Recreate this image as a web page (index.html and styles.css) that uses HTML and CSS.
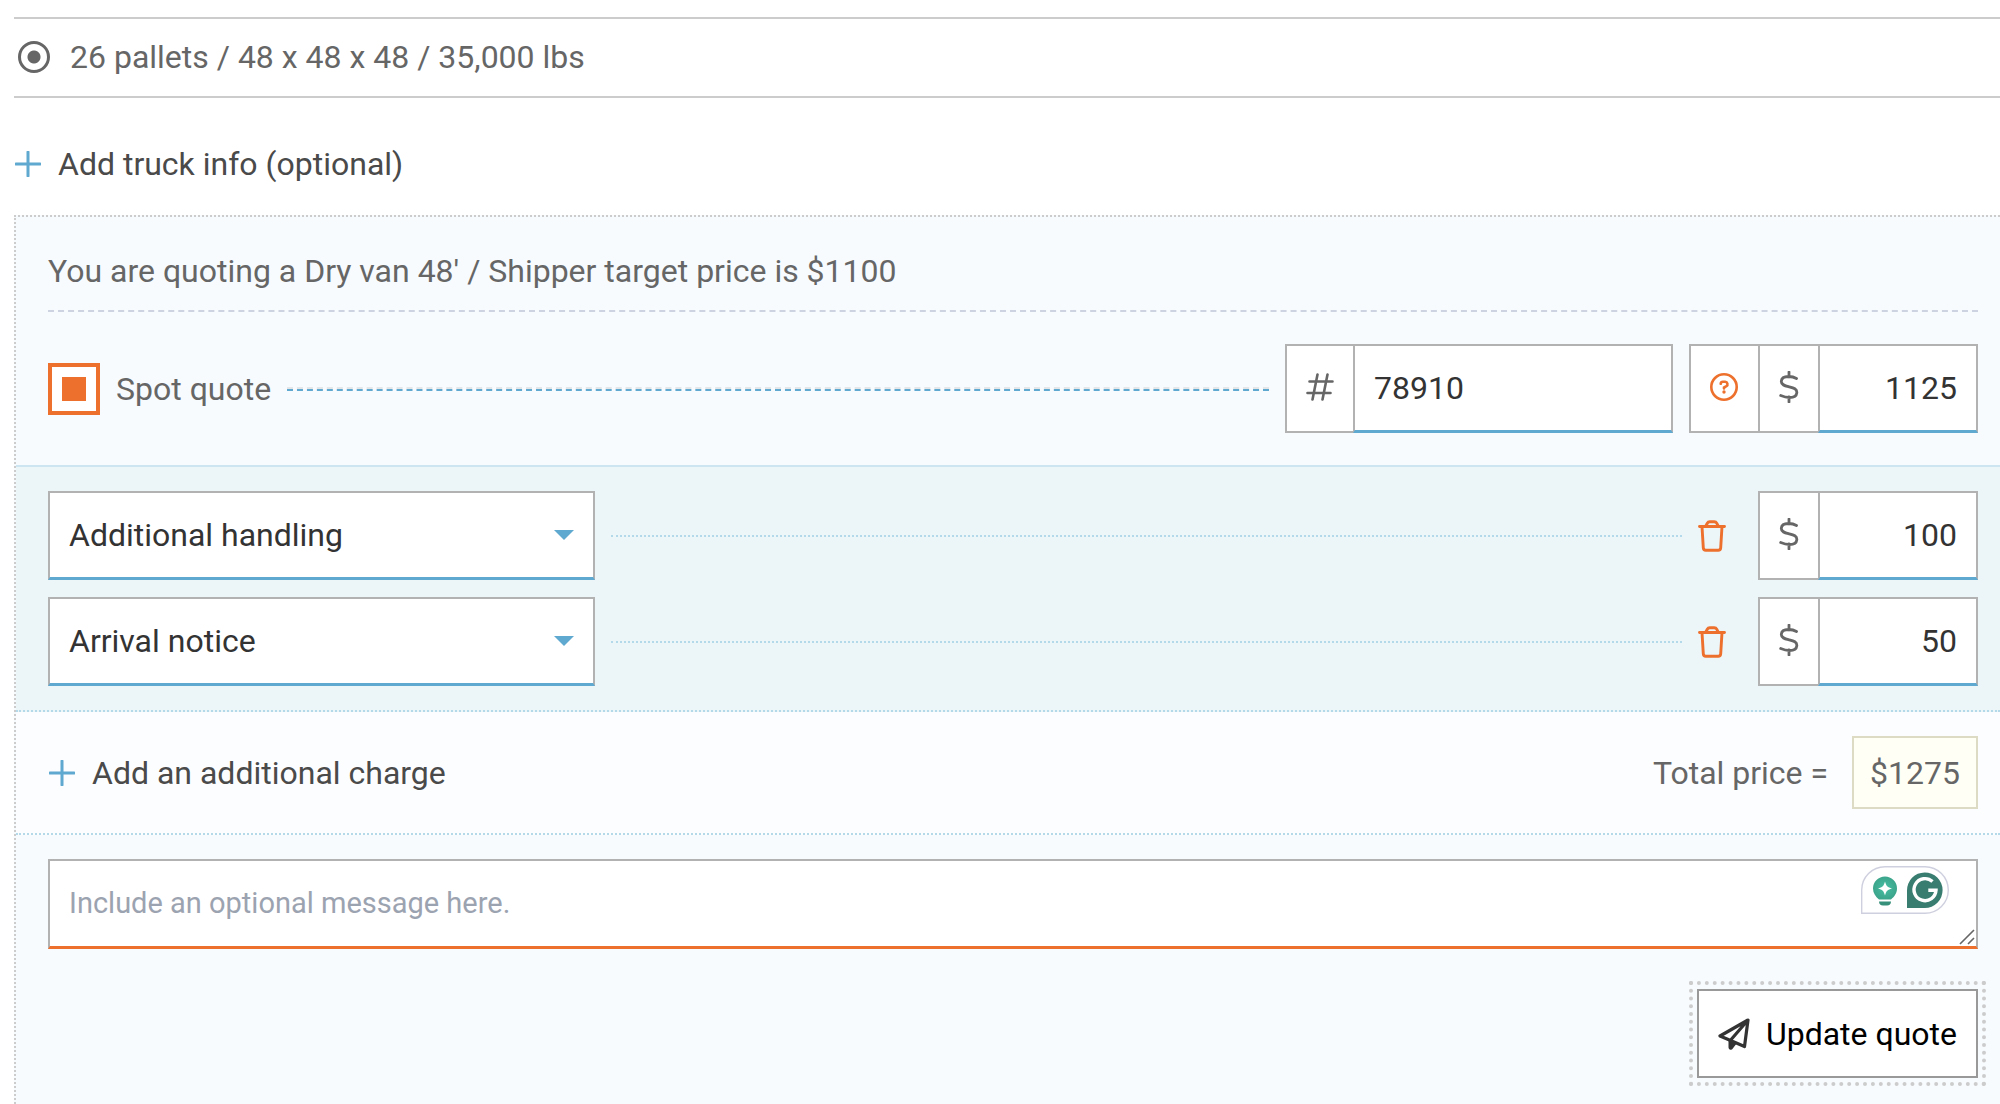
FILE: index.html
```html
<!DOCTYPE html>
<html lang="en">
<head>
<meta charset="utf-8">
<meta name="viewport" content="width=device-width, initial-scale=1">
<title>Update quote</title>
<link rel="stylesheet" href="styles.css">
</head>
<body>
<svg class="sprite" aria-hidden="true">
  <symbol id="plus" viewBox="0 0 26 26"><path d="M13 1v24M1 13h24" fill="none" stroke="#5fa8d0" stroke-width="3" stroke-linecap="round"/></symbol>
  <symbol id="dollar" viewBox="0 0 20 32"><path d="M10 1v5M10 26v5M17.500 7.500C15 6 12 5.500 9.500 5.500C5.500 5.500 2.500 7 2.300 10.300C2.100 14 6 14.800 10 15.800C14.500 16.900 18.200 17.700 17.800 21.800C17.500 25 14.500 26.500 10.500 26.500C7.500 26.500 4.500 25.700 1.700 24.500" fill="none" stroke="#666" stroke-width="2.800" stroke-linecap="round"/></symbol>
  <symbol id="trash" viewBox="0 0 28 32"><path d="M1.500 6.500h25M4 6.500l1.300 21.300a2.600 2.600 0 0 0 2.600 2.500h12.200a2.600 2.600 0 0 0 2.600-2.500L24 6.500M7.800 6L9.300 3.200a2.800 2.800 0 0 1 2.500-1.500h4.400a2.800 2.800 0 0 1 2.500 1.500L20.200 6" fill="none" stroke="#ed702d" stroke-width="2.900" stroke-linecap="round" stroke-linejoin="round"/></symbol>
</svg>

<main class="page">
  <label class="load">
    <input class="radio" type="radio" name="load" checked>
    <span>26 pallets / 48 x 48 x 48 / 35,000 lbs</span>
  </label>

  <button class="add add-truck" type="button">
    <svg class="plus"><use href="#plus"/></svg>Add truck info (optional)
  </button>

  <form class="quote">
    <section class="spot">
      <h1 class="summary">You are quoting a Dry van 48' / Shipper target price is $1100</h1>
      <div class="row">
        <label class="spot-label"><input class="check" type="checkbox" checked>Spot quote</label>
        <span class="leader leader-strong"></span>
        <div class="group">
          <span class="cell cell-hash">
            <svg width="28" height="28" viewBox="0 0 28 28" aria-hidden="true"><path d="M11.500 1.500L6.500 26.500M21.500 1.500L16.500 26.500M3.500 8.500h23M1.500 20h23" fill="none" stroke="#666" stroke-width="2.600" stroke-linecap="round"/></svg>
          </span>
          <input class="field field-number" type="text" value="78910" aria-label="Quote number">
        </div>
        <div class="group">
          <button class="cell cell-help" type="button" aria-label="Help">
            <svg width="28" height="28" viewBox="0 0 28 28"><circle cx="14" cy="14" r="12.700" fill="none" stroke="#ed702d" stroke-width="2.600"/><path d="M10.700 10.800a2.200 2.200 0 0 1 2.200-2h2.300a2.400 2.400 0 0 1 1.200 4.400l-2.400 1.400v.900" fill="none" stroke="#ed702d" stroke-width="2.600" stroke-linecap="round"/><circle cx="14" cy="19" r="1.700" fill="#ed702d"/></svg>
          </button>
          <span class="cell cell-dollar"><svg class="dollar"><use href="#dollar"/></svg></span>
          <input class="field field-price" type="text" value="1125" aria-label="Spot price">
        </div>
      </div>
    </section>

    <section class="charges">
      <div class="row">
        <div class="picker">
          <select class="select" aria-label="Charge 1"><option>Additional handling</option><option>Arrival notice</option></select>
          <svg class="caret" viewBox="0 0 20 10" aria-hidden="true"><path d="M0 0h20L10 10z" fill="#5fa8d0"/></svg>
        </div>
        <span class="leader"></span>
        <button class="remove" type="button" aria-label="Remove charge"><svg class="trash"><use href="#trash"/></svg></button>
        <div class="group">
          <span class="cell cell-dollar"><svg class="dollar"><use href="#dollar"/></svg></span>
          <input class="field field-price" type="text" value="100" aria-label="Charge 1 price">
        </div>
      </div>
      <div class="row">
        <div class="picker">
          <select class="select" aria-label="Charge 2"><option>Arrival notice</option><option>Additional handling</option></select>
          <svg class="caret" viewBox="0 0 20 10" aria-hidden="true"><path d="M0 0h20L10 10z" fill="#5fa8d0"/></svg>
        </div>
        <span class="leader"></span>
        <button class="remove" type="button" aria-label="Remove charge"><svg class="trash"><use href="#trash"/></svg></button>
        <div class="group">
          <span class="cell cell-dollar"><svg class="dollar"><use href="#dollar"/></svg></span>
          <input class="field field-price" type="text" value="50" aria-label="Charge 2 price">
        </div>
      </div>
    </section>

    <section class="totals">
      <button class="add" type="button"><svg class="plus"><use href="#plus"/></svg>Add an additional charge</button>
      <div class="total"><span>Total price =</span><output class="amount">$1275</output></div>
    </section>

    <section class="send">
      <div class="message">
        <textarea class="textarea" rows="1" placeholder="Include an optional message here." aria-label="Message"></textarea>
        <svg class="assist" viewBox="0 0 88 48" aria-hidden="true">
          <defs><radialGradient id="glow"><stop offset="0" stop-color="#48bfa4"/><stop offset="1" stop-color="#3ca58b"/></radialGradient></defs>
          <path d="M.700 47.300V24A23.300 23.300 0 0 1 24 .700h40a23.300 23.300 0 0 1 0 46.600z" fill="#fff" stroke="#cfd0df" stroke-width="1.400"/>
          <path d="M24 10.500a12 12 0 0 0-12 12c0 4.500 2.500 8 6 11h12c3.500-3 6-6.500 6-11a12 12 0 0 0-12-12z" fill="url(#glow)"/>
          <path d="M24 15.500c1.200 4.500 2.500 5.800 7 7c-4.500 1.200-5.800 2.500-7 7c-1.200-4.500-2.500-5.800-7-7c4.500-1.200 5.800-2.500 7-7z" fill="#fff"/>
          <path d="M18 35.500h12c0 2.500-1.500 4-4 4h-4c-2.500 0-4-1.500-4-4z" fill="#37907a"/>
          <path d="M46 42V24.500a17.800 17.800 0 1 1 17.800 17.500z" fill="#387d70"/>
          <path d="M71.500 15.600A11 11 0 1 0 75 24.200H67.500M75 24.500v.500M67.300 24.200H75" fill="none" stroke="#fff" stroke-width="3.400"/>
        </svg>
        <svg class="grip" viewBox="0 0 16 16" aria-hidden="true"><path d="M1 15L15 1M9 15l6-6" fill="none" stroke="#666" stroke-width="1.600"/></svg>
      </div>
      <button class="submit" type="submit">
        <svg width="32" height="32" viewBox="0 0 32 32" aria-hidden="true"><path d="M30 2L2 18l10 4.200L26.500 28.500L30 2L12.500 22.200" fill="none" stroke="#333" stroke-width="3.200" stroke-linejoin="round"/><path d="M10.500 21.500l8.500 3.500l-4.200 5.600a2.300 2.300 0 0 1-4.300-1z" fill="#333"/></svg>
        Update quote
      </button>
    </section>
  </form>
</main>
</body>
</html>
```
FILE: styles.css
```css
*, *::before, *::after {
  box-sizing: border-box;
}

body {
  margin: 0;
  background: #fff;
  color: #666;
  font: 400 32px/40px Roboto, sans-serif;
}

button, input, select, textarea {
  margin: 0;
  border-radius: 0;
  font: inherit;
}

button {
  padding: 0;
  border: 0;
  background: none;
  cursor: pointer;
}

svg {
  display: block;
  flex: none;
}

.sprite {
  position: absolute;
  width: 0;
  height: 0;
}

.page {
  display: flex;
  flex-direction: column;
  min-height: 100vh;
  padding: 17px 0 0 14px;
}

/* Selected load */
.load {
  display: flex;
  align-items: center;
  gap: 20px;
  padding: 18px 4px 19px;
  border: solid #ccc;
  border-width: 2px 0;
}

.radio {
  appearance: none;
  width: 32px;
  height: 32px;
  border: 3px solid #666;
  border-radius: 50%;
  background: radial-gradient(circle, #666 6px, transparent 7px);
}

.add {
  display: flex;
  align-items: center;
  gap: 17px;
  color: #4a4a4a;
}

.add-truck {
  align-self: flex-start;
  padding: 46px 0 31px 1px;
}

.plus {
  width: 26px;
  height: 26px;
}

/* Quote panel */
.quote {
  flex: 1;
  border: 2px dotted #ccc;
  border-width: 2px 0 0 2px;
  background: #f7fbfe;
}

.spot {
  padding: 34px 22px 32px 32px;
  border-bottom: 2px solid #cde5f0;
}

.summary {
  margin: 0;
  padding-bottom: 19px;
  border-bottom: 2px dashed #cdd3e0;
  font-size: 32px;
  font-weight: 400;
}

.row {
  display: flex;
  align-items: center;
  gap: 16px;
}

.spot .row {
  padding-top: 32px;
}

.spot-label {
  display: flex;
  align-items: center;
  gap: 16px;
}

.check {
  appearance: none;
  width: 52px;
  height: 52px;
  border: 4px solid #ed702d;
  background: linear-gradient(#ed702d, #ed702d) center / 24px 24px no-repeat #fff;
}

.leader {
  flex: 1;
  border-top: 2px dotted #b4d9e8;
}

.leader-strong {
  border-top: 2px dashed #e4e6e8;
  border-bottom: 2px dashed #5fa8d0;
}

.group {
  display: flex;
  height: 89px;
}

.cell {
  display: flex;
  align-items: center;
  justify-content: center;
  padding-bottom: 4px;
  border: 2px solid #b2b2b2;
  border-right: 0;
  background: #fff;
}

.cell-hash {
  width: 68px;
}

.cell-help {
  width: 69px;
  padding-right: 2px;
}

.cell-dollar {
  width: 60px;
}

.dollar {
  width: 20px;
  height: 32px;
}

.field, .select, .textarea {
  display: block;
  border: 2px solid #b2b2b2;
  border-bottom: 3px solid #5fa8d0;
  outline: 0;
  background: #fff;
  color: #333;
}

.field {
  padding: 0 19px 1px;
}

.field-number {
  width: 320px;
}

.field-price {
  width: 160px;
  text-align: right;
}

/* Additional charges */
.charges {
  display: flex;
  flex-direction: column;
  gap: 17px;
  padding: 24px 22px 24px 32px;
  border-bottom: 2px dotted #b4d9e8;
  background: #ecf5f8;
}

.picker {
  position: relative;
  width: 547px;
}

.select {
  appearance: none;
  width: 100%;
  height: 89px;
  padding: 0 60px 0 19px;
}

.caret {
  position: absolute;
  top: 39px;
  right: 21px;
  width: 20px;
  height: 10px;
  pointer-events: none;
}

.remove {
  margin-right: 16px;
}

.trash {
  width: 28px;
  height: 32px;
}

/* Total */
.totals {
  display: flex;
  align-items: center;
  justify-content: space-between;
  padding: 24px 22px 24px 33px;
  border-bottom: 2px dotted #b4d9e8;
  background: #fcfdff;
}

.total {
  display: flex;
  align-items: center;
  gap: 24px;
}

.amount {
  padding: 15px 16px 14px;
  border: 2px solid #dddbc3;
  background: #fffff6;
}

/* Message and submit */
.send {
  display: flex;
  flex-direction: column;
  align-items: flex-end;
  gap: 40px;
  padding: 24px 22px 25px 32px;
}

.message {
  position: relative;
  width: 100%;
}

.textarea {
  width: 100%;
  height: 90px;
  padding: 22px 120px 0 19px;
  border-bottom-color: #ed702d;
  overflow: hidden;
  resize: none;
}

.textarea::placeholder {
  color: #9ca3b0;
  font-size: 29px;
  opacity: 1;
}

.assist {
  position: absolute;
  top: 7px;
  right: 29px;
  width: 88px;
  height: 48px;
}

.grip {
  position: absolute;
  right: 3px;
  bottom: 4px;
  width: 16px;
  height: 16px;
}

.submit {
  display: flex;
  align-items: center;
  gap: 16px;
  height: 89px;
  padding: 0 19px;
  border: 2px solid #999;
  outline: 4px dotted #ccc;
  outline-offset: 4px;
  background: #fff;
  color: #000;
}
```
